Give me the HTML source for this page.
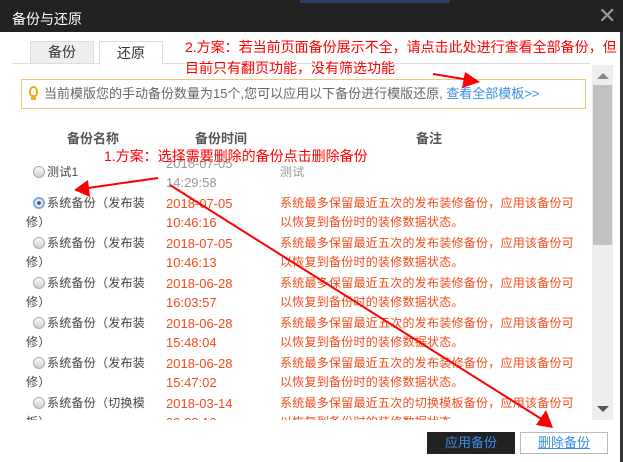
<!DOCTYPE html><html><head><meta charset="utf-8"><style>
*{margin:0;padding:0;box-sizing:border-box}
body{width:623px;height:462px;overflow:hidden;background:#fff;font-family:"Liberation Sans","Noto Sans CJK SC",sans-serif;position:relative}
.a{position:absolute;white-space:nowrap}
.t{font-size:13px;line-height:19px}
.n{font-size:12px;letter-spacing:0.25px;line-height:19px}
.g{color:#999}.r{color:#f04c1c}.k{color:#444}
.rad{display:inline-block;width:12px;height:12px;border-radius:50%;border:1px solid #aaa;background:linear-gradient(#fff,#ccc);vertical-align:-2px;margin-right:2px}
.red{color:#f00;font-size:14px}
.nm{left:14px;width:130px;white-space:normal;text-indent:7px}
</style></head><body>
<div class="a" style="left:0;top:0;width:623px;height:32px;background:#222"></div>
<div class="a" style="left:300px;top:0;width:150px;height:3px;background:#2a3f6a"></div>
<div class="a" style="left:12px;top:9px;color:#fff;font-size:14px">备份与还原</div>
<div class="a" style="left:598px;top:3px;color:#999;font-size:22px">✕</div>
<div class="a" style="left:620px;top:32px;width:3px;height:430px;background:#333"></div>
<div class="a" style="left:12px;top:63px;width:578px;height:1px;background:#ddd"></div>
<div class="a" style="left:30px;top:41px;width:64px;height:23px;background:#eee;border:1px solid #ddd;font-size:14px;color:#333;text-align:center;line-height:21px">备份</div>
<div class="a" style="left:99px;top:41px;width:64px;height:24px;background:#fff;border:1px solid #ddd;border-bottom:none;font-size:14px;color:#333;text-align:center;line-height:22px">还原</div>
<div class="a" style="left:21px;top:79px;width:565px;height:30px;border:1px solid #f5c37a"></div>
<div class="a" style="left:29px;top:86px;width:9px;height:11px;border:2px solid #f5a623;border-radius:50% 50% 40% 40%"></div>
<div class="a" style="left:31px;top:97px;width:5px;height:3px;background:#f5a623"></div>
<div class="a t" style="left:44px;top:84px;color:#666">当前模版您的手动备份数量为15个,您可以应用以下备份进行模版还原, <span style="color:#3a8ee6">查看全部模板&gt;&gt;</span></div>
<div class="a" style="left:592px;top:65px;width:21px;height:355px;background:#eee"></div>
<div class="a" style="left:593px;top:85px;width:19px;height:160px;background:#c1c1c1"></div>
<div class="a" style="left:597px;top:73px;border:6px solid transparent;border-bottom:6px solid #888;border-top:none"></div>
<div class="a" style="left:597px;top:406px;border:6px solid transparent;border-top:6px solid #555;border-bottom:none"></div>
<div class="a t" style="left:67px;top:129px;color:#555;font-weight:bold">备份名称</div>
<div class="a t" style="left:195px;top:129px;color:#555;font-weight:bold">备份时间</div>
<div class="a t" style="left:416px;top:129px;color:#555;font-weight:bold">备注</div>
<div class="a" style="left:12px;top:150px;width:578px;height:270px;overflow:hidden">
<div class="a n k" style="left:21px;top:13px"><span class="rad"></span>测试1</div>
<div class="a t g" style="left:154px;top:4px">2018-07-05<br>14:29:58</div>
<div class="a n g" style="left:268px;top:13px">测试</div>
<div class="a n k nm" style="top:44px"><span class="rad" style="border:2px solid #7aa7e6;background:radial-gradient(#555 30%,#eee 40%)"></span>系统备份（发布装修）</div>
<div class="a t r" style="left:154px;top:44px">2018-07-05<br>10:46:16</div>
<div class="a n r" style="left:268px;top:44px">系统最多保留最近五次的发布装修备份，应用该备份可<br>以恢复到备份时的装修数据状态。</div>
<div class="a n k nm" style="top:84px"><span class="rad"></span>系统备份（发布装修）</div>
<div class="a t r" style="left:154px;top:84px">2018-07-05<br>10:46:13</div>
<div class="a n r" style="left:268px;top:84px">系统最多保留最近五次的发布装修备份，应用该备份可<br>以恢复到备份时的装修数据状态。</div>
<div class="a n k nm" style="top:124px"><span class="rad"></span>系统备份（发布装修）</div>
<div class="a t r" style="left:154px;top:124px">2018-06-28<br>16:03:57</div>
<div class="a n r" style="left:268px;top:124px">系统最多保留最近五次的发布装修备份，应用该备份可<br>以恢复到备份时的装修数据状态。</div>
<div class="a n k nm" style="top:164px"><span class="rad"></span>系统备份（发布装修）</div>
<div class="a t r" style="left:154px;top:164px">2018-06-28<br>15:48:04</div>
<div class="a n r" style="left:268px;top:164px">系统最多保留最近五次的发布装修备份，应用该备份可<br>以恢复到备份时的装修数据状态。</div>
<div class="a n k nm" style="top:204px"><span class="rad"></span>系统备份（发布装修）</div>
<div class="a t r" style="left:154px;top:204px">2018-06-28<br>15:47:02</div>
<div class="a n r" style="left:268px;top:204px">系统最多保留最近五次的发布装修备份，应用该备份可<br>以恢复到备份时的装修数据状态。</div>
<div class="a n k nm" style="top:244px"><span class="rad"></span>系统备份（切换模板）</div>
<div class="a t r" style="left:154px;top:244px">2018-03-14<br>09:28:16</div>
<div class="a n r" style="left:268px;top:244px">系统最多保留最近五次的切换模板备份，应用该备份可<br>以恢复到备份时的装修数据状态。</div>
</div>
<div class="a" style="left:427px;top:432px;width:88px;height:22px;background:#222;color:#3a8ee6;font-size:13px;text-align:center;line-height:22px">应用备份</div>
<div class="a" style="left:520px;top:432px;width:88px;height:22px;background:#fff;border:1px solid #bbb;color:#3a8ee6;font-size:13px;text-align:center;line-height:20px;text-decoration:underline">删除备份</div>
<div class="a red" style="left:185px;top:37px;line-height:21px">2.方案：若当前页面备份展示不全，请点击此处进行查看全部备份，但<br>目前只有翻页功能，没有筛选功能</div>
<div class="a red" style="left:104px;top:146px">1.方案：选择需要删除的备份点击删除备份</div>
<svg class="a" style="left:0;top:0" width="623" height="462">
<g stroke="#f00" stroke-width="2" fill="#f00">
<line x1="433" y1="74" x2="470" y2="80"/><polygon points="480,82 465,72 462,88" stroke="none"/>
<line x1="158" y1="178" x2="88" y2="188"/><polygon points="74,190 88,180 90,197" stroke="none"/>
<line x1="170" y1="185" x2="543" y2="420"/><polygon points="553,428 536,425 546,410" stroke="none"/>
</g></svg>
</body></html>
